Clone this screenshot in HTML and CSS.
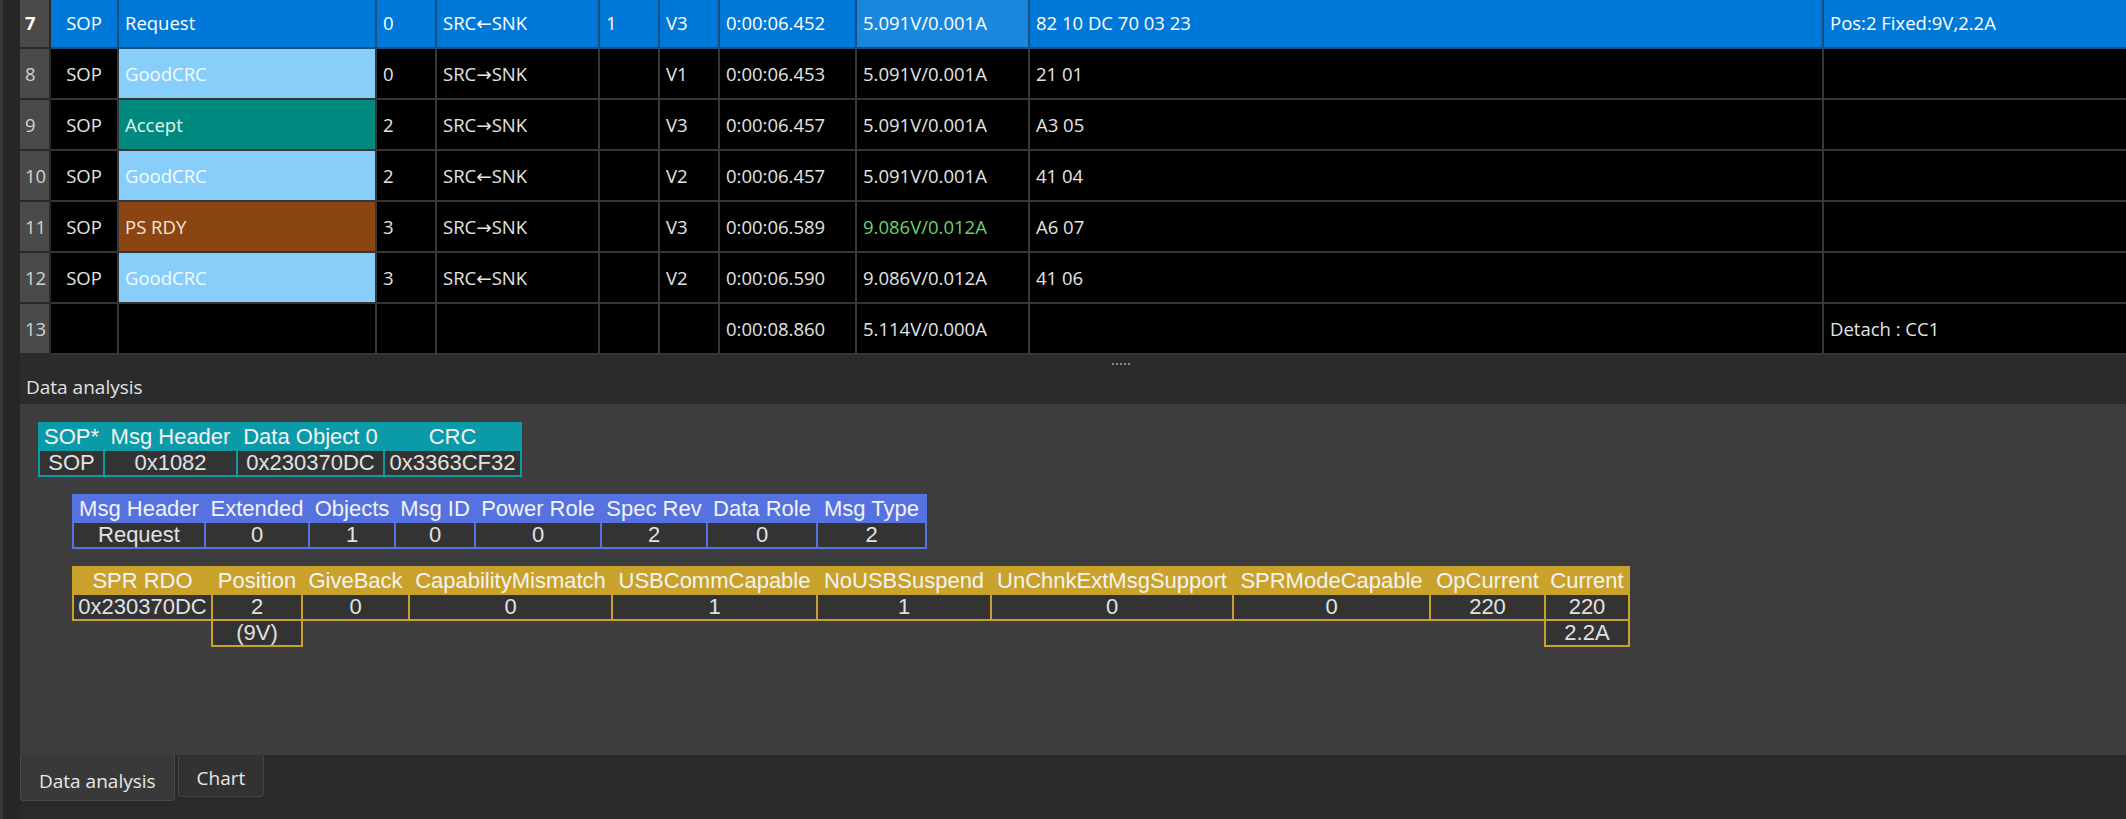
FILE: index.html
```html
<!DOCTYPE html>
<html>
<head>
<meta charset="utf-8">
<link rel="stylesheet" href="styles.css">
</head>
<body>
<div class="app">
  <div class="strip"></div>
  <div class="main">
    <div class="grid">
      <div class="row sel">
        <div class="c rh">7</div><div class="c ctr">SOP</div><div class="c">Request</div><div class="c">0</div><div class="c">SRC←SNK</div><div class="c">1</div><div class="c">V3</div><div class="c">0:00:06.452</div><div class="c focus">5.091V/0.001A</div><div class="c">82 10 DC 70 03 23</div><div class="c">Pos:2 Fixed:9V,2.2A</div>
      </div>
      <div class="row">
        <div class="c rh">8</div><div class="c ctr">SOP</div><div class="c good">GoodCRC</div><div class="c">0</div><div class="c">SRC→SNK</div><div class="c"></div><div class="c">V1</div><div class="c">0:00:06.453</div><div class="c">5.091V/0.001A</div><div class="c">21 01</div><div class="c"></div>
      </div>
      <div class="row">
        <div class="c rh">9</div><div class="c ctr">SOP</div><div class="c accept">Accept</div><div class="c">2</div><div class="c">SRC→SNK</div><div class="c"></div><div class="c">V3</div><div class="c">0:00:06.457</div><div class="c">5.091V/0.001A</div><div class="c">A3 05</div><div class="c"></div>
      </div>
      <div class="row">
        <div class="c rh">10</div><div class="c ctr">SOP</div><div class="c good">GoodCRC</div><div class="c">2</div><div class="c">SRC←SNK</div><div class="c"></div><div class="c">V2</div><div class="c">0:00:06.457</div><div class="c">5.091V/0.001A</div><div class="c">41 04</div><div class="c"></div>
      </div>
      <div class="row">
        <div class="c rh">11</div><div class="c ctr">SOP</div><div class="c psrdy">PS RDY</div><div class="c">3</div><div class="c">SRC→SNK</div><div class="c"></div><div class="c">V3</div><div class="c">0:00:06.589</div><div class="c green">9.086V/0.012A</div><div class="c">A6 07</div><div class="c"></div>
      </div>
      <div class="row">
        <div class="c rh">12</div><div class="c ctr">SOP</div><div class="c good">GoodCRC</div><div class="c">3</div><div class="c">SRC←SNK</div><div class="c"></div><div class="c">V2</div><div class="c">0:00:06.590</div><div class="c">9.086V/0.012A</div><div class="c">41 06</div><div class="c"></div>
      </div>
      <div class="row">
        <div class="c rh">13</div><div class="c ctr"></div><div class="c"></div><div class="c"></div><div class="c"></div><div class="c"></div><div class="c"></div><div class="c">0:00:08.860</div><div class="c">5.114V/0.000A</div><div class="c"></div><div class="c">Detach : CC1</div>
      </div>
    </div>

    <div class="split">
      <div class="grip"></div>
      <div class="label">Data analysis</div>
    </div>

    <div class="panel">
      <div class="dt t1">
        <div class="h f">SOP*</div><div class="h">Msg Header</div><div class="h">Data Object 0</div><div class="h">CRC</div>
        <div class="d f">SOP</div><div class="d">0x1082</div><div class="d">0x230370DC</div><div class="d">0x3363CF32</div>
      </div>
      <div class="dt t2">
        <div class="h f">Msg Header</div><div class="h">Extended</div><div class="h">Objects</div><div class="h">Msg ID</div><div class="h">Power Role</div><div class="h">Spec Rev</div><div class="h">Data Role</div><div class="h">Msg Type</div>
        <div class="d f">Request</div><div class="d">0</div><div class="d">1</div><div class="d">0</div><div class="d">0</div><div class="d">2</div><div class="d">0</div><div class="d">2</div>
      </div>
      <div class="dt t3">
        <div class="h f">SPR RDO</div><div class="h">Position</div><div class="h">GiveBack</div><div class="h">CapabilityMismatch</div><div class="h">USBCommCapable</div><div class="h">NoUSBSuspend</div><div class="h">UnChnkExtMsgSupport</div><div class="h">SPRModeCapable</div><div class="h">OpCurrent</div><div class="h">Current</div>
        <div class="d f">0x230370DC</div><div class="d">2</div><div class="d">0</div><div class="d">0</div><div class="d">1</div><div class="d">1</div><div class="d">0</div><div class="d">0</div><div class="d">220</div><div class="d">220</div>
        <div class="d ex col-pos">(9V)</div><div class="d ex col-cur">2.2A</div>
      </div>
    </div>

    <div class="tabs">
      <div class="tab active">Data analysis</div>
      <div class="tab">Chart</div>
    </div>
  </div>
</div>
</body>
</html>
```

FILE: styles.css
```css
html, body {
  margin: 0;
  padding: 0;
}
body {
  width: 2126px;
  height: 819px;
  overflow: hidden;
  background: #2a2a2a;
  font-family: "Open Sans", "Noto Sans", "DejaVu Sans", sans-serif;
  color: #e6e6e6;
}
.app {
  display: flex;
  height: 819px;
}
.strip {
  flex: none;
  width: 20px;
  box-sizing: border-box;
  background: #262626;
  border-left: 3px solid #383838;
}
.main {
  flex: 1;
  min-width: 0;
  display: flex;
  flex-direction: column;
  overflow: hidden;
}

/* ---------- message grid ---------- */
.grid {
  flex: none;
  margin-top: -2px;
}
.row {
  display: grid;
  grid-template-columns: 31px 68px 258px 60px 163px 60px 60px 137px 173px 794px 302px;
  height: 51px;
  background: #000;
}
.c {
  display: flex;
  align-items: center;
  padding-left: 6px;
  border-right: 2px solid #363636;
  border-bottom: 2px solid #363636;
  font-size: 18.5px;
  white-space: nowrap;
  overflow: hidden;
  color: #e4e4e4;
}
.c:last-child {
  border-right: none;
}
.ctr {
  justify-content: center;
  padding-left: 0;
}
.rh {
  padding-left: 5px;
  background: #4a4a4a;
  border-color: #2a2a2a;
  color: #d2d2d2;
}
.sel {
  background: #0078d7;
}
.sel .c {
  border-color: #1b4f82;
  color: #ffffff;
}
.sel .rh {
  border-color: #2a2a2a;
  font-weight: 700;
  color: #ffffff;
}
.sel .focus {
  background: #1a86dc;
}
.good {
  background: #87cefa;
  color: #f6fbff;
}
.accept {
  background: #00897f;
  color: #e3f5ea;
}
.psrdy {
  background: #8b4513;
  color: #f5e8dc;
}
.green {
  color: #6fcf6f;
}

/* ---------- splitter ---------- */
.split {
  flex: none;
  height: 49px;
  background: #2b2b2b;
}
.grip {
  margin: 8px 0 0 1092px;
  width: 18px;
  height: 0;
  border-top: 2px dotted #8a8a8a;
}
.label {
  margin: 10px 0 0 6px;
  font-size: 19px;
  line-height: 24px;
  color: #e2e2e2;
}

/* ---------- data analysis panel ---------- */
.panel {
  flex: none;
  height: 351px;
  box-sizing: border-box;
  padding: 18px 0 0 18px;
  background: #3d3d3d;
  display: flex;
  flex-direction: column;
  align-items: flex-start;
  gap: 17px;
}
.dt {
  display: grid;
  font-family: "Liberation Sans", Arial, sans-serif;
  font-size: 22px;
}
.dt > div {
  text-align: center;
  white-space: nowrap;
  border-right: 2px solid;
  border-bottom: 2px solid;
  border-color: inherit;
}
.dt .h {
  border-top: 2px solid;
  border-top-color: inherit;
  line-height: 25px;
  color: #f3f3f3;
}
.dt .d {
  line-height: 24px;
  background: #333333;
  color: #e2e2e2;
}
.dt .f {
  border-left: 2px solid;
  border-left-color: inherit;
}
.dt .ex {
  border-left: 2px solid;
  border-left-color: inherit;
  margin-left: -2px;
}
.t1 {
  grid-template-columns: 67px 133px 147px 137px;
  border-color: #0b9aa8;
}
.t1 .h {
  background: #0b9aa8;
}
.t2 {
  margin-left: 34px;
  grid-template-columns: 134px 104px 86px 80px 126px 106px 110px 109px;
  border-color: #5572e0;
}
.t2 .h {
  background: #5572e0;
}
.t3 {
  margin-left: 34px;
  grid-template-columns: 141px 90px 107px 203px 205px 174px 242px 197px 115px 84px;
  border-color: #c9a22c;
}
.t3 .h {
  background: #c9a22c;
}
.col-pos {
  grid-column: 2;
}
.col-cur {
  grid-column: 10;
}

/* ---------- bottom tabs ---------- */
.tabs {
  flex: 1;
  display: flex;
  align-items: flex-start;
  gap: 3px;
  background: #2a2a2a;
}
.tab {
  box-sizing: border-box;
  height: 42px;
  padding: 10px 18px 0 18px;
  font-size: 19px;
  line-height: 26px;
  color: #e8e8e8;
  background: #323232;
  border: 1px solid #454545;
  border-top: none;
  border-radius: 0 0 4px 4px;
}
.tab.active {
  height: 46px;
  padding-top: 13px;
  background: #393939;
  border-color: #4a4a4a;
}
```
